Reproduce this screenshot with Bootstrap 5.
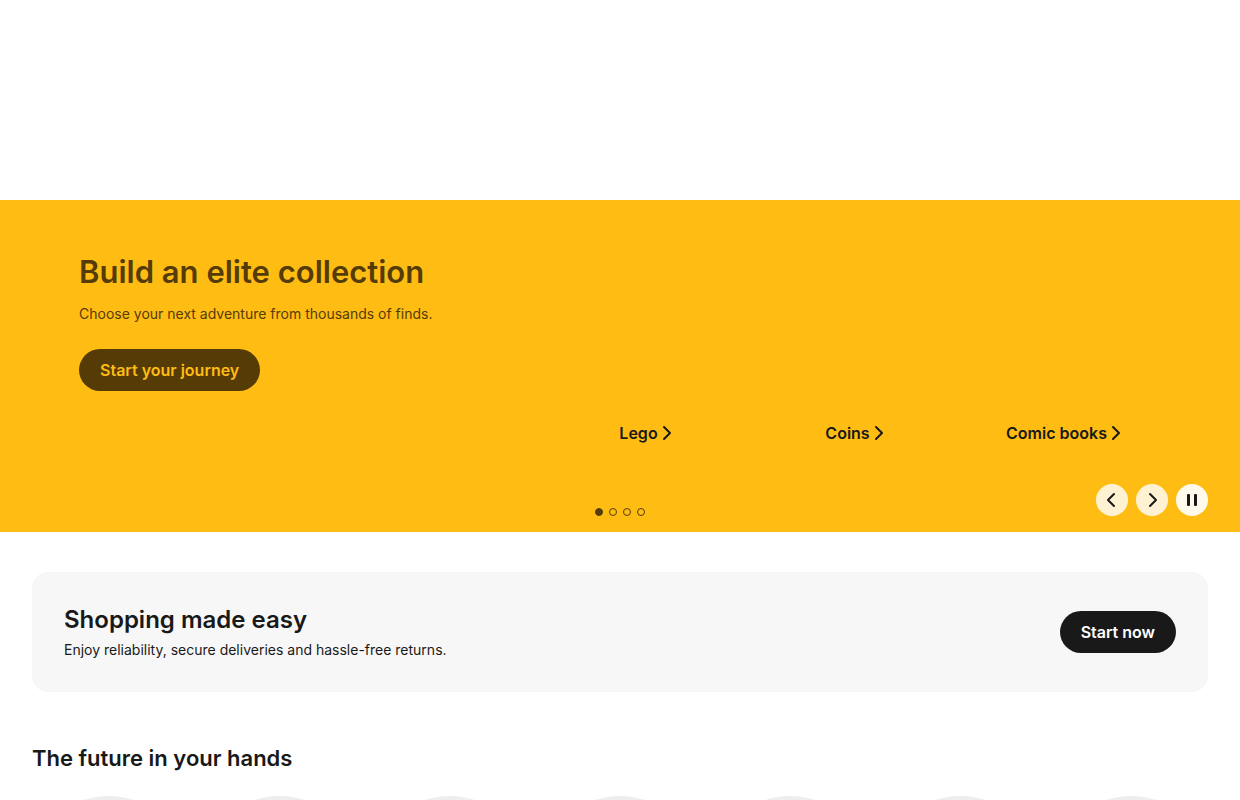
<!DOCTYPE html>
<html lang="en">
<head>
<meta charset="utf-8">
<meta name="viewport" content="width=device-width, initial-scale=1">
<title>Build an elite collection</title>
<link href="https://cdn.jsdelivr.net/npm/bootstrap@5.3.0/dist/css/bootstrap.min.css" rel="stylesheet">
<style>
  :root { --ink: #191919; --amber: #ffbd14; --brown: #553b06; }
  body { font-family: Inter, "Liberation Sans", sans-serif; color: var(--ink); font-size: 14px; line-height: 20px; }
  .page-header { height: 200px; }
  .hero { background: var(--amber); color: var(--brown); }
  .hero-grid { display: grid; grid-template-columns: 14fr 19fr; grid-template-rows: minmax(193px, auto); padding: 52px 72px 0 79px; }
  .hero-title { font-size: 31px; line-height: 40px; font-weight: 600; margin-bottom: 12px; }
  .hero-text { margin-bottom: 25px; }
  .btn-pill { height: 42px; padding: 0 21px; border: 0; border-radius: 21px; font-size: 16px; line-height: 24px; font-weight: 600; }
  .btn-brown, .btn-brown:hover { background: var(--brown); color: var(--amber); }
  .btn-ink, .btn-ink:hover { background: var(--ink); color: #fff; }
  .hero-links a { color: var(--ink); font-size: 16px; line-height: 24px; font-weight: 600; }
  .hero-bar { display: grid; grid-template-columns: 1fr auto 1fr; padding: 39px 32px 16px; }
  .dot { width: 8px; height: 8px; border: 1px solid var(--brown); border-radius: 50%; background: transparent; padding: 0; }
  .dot.active { background: var(--brown); }
  .dots { gap: 6px; }
  .round-btn { width: 32px; height: 32px; border: 0; border-radius: 50%; background: #fff2d3; color: var(--ink); padding: 0; }
  .round-btn.pause { background: #fffaeb; }
  .glyph { fill: none; stroke: currentColor; stroke-width: 2; stroke-linecap: round; stroke-linejoin: round; }
  .page-body { padding: 40px 32px; }
  .promo { background: #f7f7f7; border-radius: 16px; padding: 30px 32px; min-height: 120px; }
  .promo-title { font-size: 24px; line-height: 32px; font-weight: 600; margin-bottom: 4px; }
  .section-title { font-size: 22px; line-height: 28px; font-weight: 600; margin: 52px 0 24px; }
  .tiles { display: grid; grid-template-columns: repeat(7, 1fr); gap: 16px; }
  .tile { display: block; aspect-ratio: 1; border-radius: 50%; background: #eee; }
</style>
</head>
<body>
<header class="page-header"></header>

<section class="hero" aria-label="Featured">
  <div class="hero-grid">
    <div>
      <h1 class="hero-title text-nowrap">Build an elite collection</h1>
      <p class="hero-text text-nowrap">Choose your next adventure from thousands of finds.</p>
      <button type="button" class="btn btn-pill btn-brown">Start your journey</button>
    </div>
    <nav class="hero-links d-flex align-items-end" aria-label="Collections">
      <div class="row g-0 w-100 text-center">
        <div class="col"><a href="#lego" class="d-inline-flex align-items-center gap-1 text-decoration-none">Lego
          <svg class="glyph" width="10" height="16" viewBox="0 0 10 16" aria-hidden="true"><path d="M2 2l6 6-6 6"/></svg></a></div>
        <div class="col"><a href="#coins" class="d-inline-flex align-items-center gap-1 text-decoration-none">Coins
          <svg class="glyph" width="10" height="16" viewBox="0 0 10 16" aria-hidden="true"><path d="M2 2l6 6-6 6"/></svg></a></div>
        <div class="col"><a href="#comics" class="d-inline-flex align-items-center gap-1 text-decoration-none">Comic books
          <svg class="glyph" width="10" height="16" viewBox="0 0 10 16" aria-hidden="true"><path d="M2 2l6 6-6 6"/></svg></a></div>
      </div>
    </nav>
  </div>
  <div class="hero-bar">
    <span></span>
    <div class="dots d-flex align-items-end">
      <button type="button" class="dot active" aria-label="Slide 1"></button>
      <button type="button" class="dot" aria-label="Slide 2"></button>
      <button type="button" class="dot" aria-label="Slide 3"></button>
      <button type="button" class="dot" aria-label="Slide 4"></button>
    </div>
    <div class="d-flex justify-content-end gap-2">
      <button type="button" class="round-btn d-flex align-items-center justify-content-center" aria-label="Previous">
        <svg class="glyph" width="16" height="16" viewBox="0 0 16 16"><path d="M10 2L4 8l6 6"/></svg></button>
      <button type="button" class="round-btn d-flex align-items-center justify-content-center" aria-label="Next">
        <svg class="glyph" width="16" height="16" viewBox="0 0 16 16"><path d="M6 2l6 6-6 6"/></svg></button>
      <button type="button" class="round-btn pause d-flex align-items-center justify-content-center" aria-label="Pause">
        <svg width="16" height="16" viewBox="0 0 16 16" fill="currentColor"><rect x="3" y="2" width="3" height="12" rx="1"/><rect x="10" y="2" width="3" height="12" rx="1"/></svg></button>
    </div>
  </div>
</section>

<main class="page-body">
  <section class="promo d-flex align-items-center justify-content-between gap-3">
    <div>
      <h2 class="promo-title">Shopping made easy</h2>
      <p class="mb-0">Enjoy reliability, secure deliveries and hassle-free returns.</p>
    </div>
    <button type="button" class="btn btn-pill btn-ink text-nowrap">Start now</button>
  </section>

  <h2 class="section-title">The future in your hands</h2>
  <div class="tiles">
    <span class="tile"></span><span class="tile"></span><span class="tile"></span><span class="tile"></span><span class="tile"></span><span class="tile"></span><span class="tile"></span>
  </div>
</main>
<script src="https://cdn.jsdelivr.net/npm/bootstrap@5.3.0/dist/js/bootstrap.bundle.min.js"></script>
</body>
</html>
